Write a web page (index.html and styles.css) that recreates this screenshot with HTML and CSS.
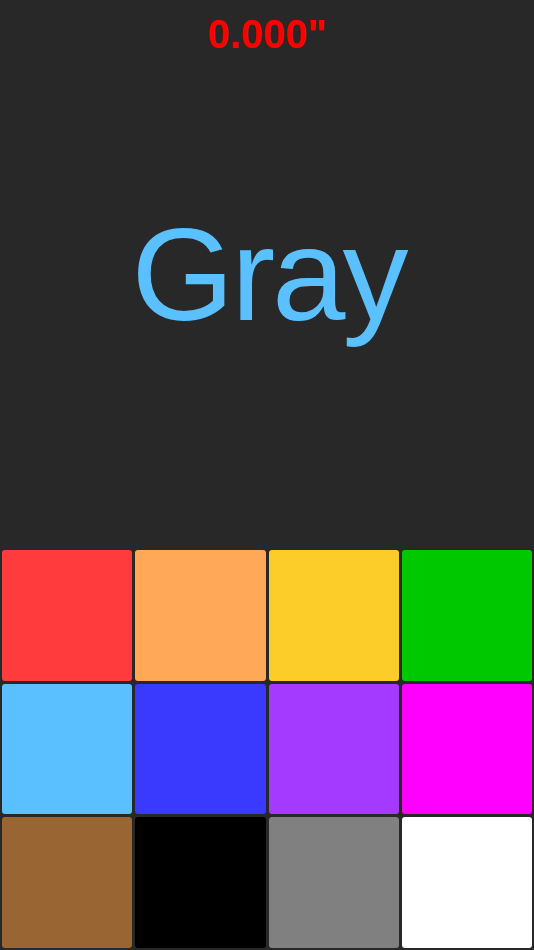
FILE: index.html
```html
<!DOCTYPE html>
<html lang="en">
<head>
<meta charset="utf-8">
<title>Color Timer</title>
<link rel="stylesheet" href="styles.css">
</head>
<body>
<div class="app">
  <div class="timer">0.000"</div>
  <div class="stage">
    <div class="word">Gray</div>
  </div>
  <div class="palette">
    <div class="swatch red"></div>
    <div class="swatch orange"></div>
    <div class="swatch yellow"></div>
    <div class="swatch green"></div>
    <div class="swatch sky"></div>
    <div class="swatch blue"></div>
    <div class="swatch purple"></div>
    <div class="swatch magenta"></div>
    <div class="swatch brown"></div>
    <div class="swatch black"></div>
    <div class="swatch gray"></div>
    <div class="swatch white"></div>
  </div>
</div>
</body>
</html>
```
FILE: styles.css
```css
html, body {
  margin: 0;
  padding: 0;
  background: #282828;
}

.app {
  width: 534px;
  height: 950px;
  display: flex;
  flex-direction: column;
  font-family: "Liberation Sans", Arial, sans-serif;
}

.timer {
  padding-top: 12px;
  height: 45px;
  line-height: 45px;
  font-size: 40px;
  font-weight: bold;
  color: #ff0000;
  text-align: center;
}

.stage {
  flex: 1;
  display: flex;
  align-items: center;
  justify-content: center;
  padding-bottom: 57px;
}

.word {
  font-size: 132px;
  line-height: 1;
  letter-spacing: -3px;
  padding-left: 3px;
  color: #5ac0ff;
}

.palette {
  box-sizing: border-box;
  height: 400px;
  padding: 0 2px 2px;
  display: grid;
  grid-template-columns: repeat(4, 1fr);
  grid-template-rows: repeat(3, 1fr);
  gap: 3px;
}

.swatch {
  border-radius: 3px;
}

.red { background: #ff3b3d; }
.orange { background: #ffa857; }
.yellow { background: #fccc29; }
.green { background: #00c800; }
.sky { background: #5ac0ff; }
.blue { background: #3a3aff; }
.purple { background: #a43aff; }
.magenta { background: #ff00ff; }
.brown { background: #996633; }
.black { background: #000000; }
.gray { background: #808080; }
.white { background: #ffffff; }
```
